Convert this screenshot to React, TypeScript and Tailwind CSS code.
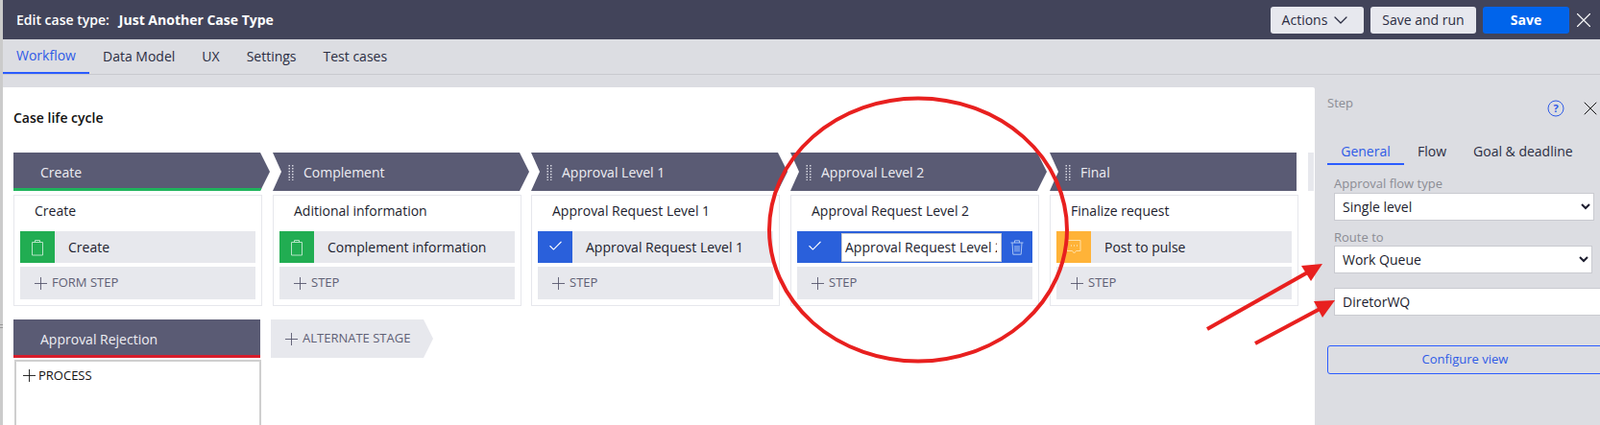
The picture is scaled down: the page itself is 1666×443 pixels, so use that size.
import { Check, ChevronDown, Plus, X } from 'lucide-react';

const font = "font-['Open_Sans',sans-serif]";

function Handle() {
  return (
    <svg width="7" height="16" viewBox="0 0 7 16" className="shrink-0 text-[#d5d6df]" fill="currentColor">
      {[0, 3, 6, 9, 12, 15].map((y) => (
        <g key={y}>
          <rect x="0.5" y={y} width="1.5" height="1.5" />
          <rect x="4" y={y} width="1.5" height="1.5" />
        </g>
      ))}
    </svg>
  );
}

function Clipboard() {
  return (
    <svg width="14" height="18" viewBox="0 0 14 18" fill="none" stroke="#b5e4c6" strokeWidth="1">
      <path d="M1.5 3.5h11v13.5h-11z" />
      <path d="M4.5 3.5V1.5h5v2" />
    </svg>
  );
}

function Pulse() {
  return (
    <svg width="16" height="17" viewBox="0 0 16 17" fill="none" stroke="#ffe0a6" strokeWidth="1">
      <path d="M1 1.5h14v11h-4.5l-2 2.5-2-2.5H1z" />
      <path d="M5 7h1M8 7h1M11 7h1" strokeWidth="1.3" />
    </svg>
  );
}

function Trash() {
  return (
    <svg width="14" height="16" viewBox="0 0 14 16" fill="none" stroke="#a9c4f2" strokeWidth="1">
      <path d="M0.5 3h13M4.5 3V0.8h5V3M2 3l.8 12.2h8.4L12 3M5 6v6.5M7 6v6.5M9 6v6.5" />
    </svg>
  );
}

function AddRow({ label }: { label: string }) {
  return (
    <div className="flex h-[34px] items-center bg-[#e7e8ed] pl-[11px] text-[13px] text-[#5f6075]">
      <Plus size={21} strokeWidth={1} className="mr-[1px] text-[#53546a]" />
      {label}
    </div>
  );
}

function StepRow({ cell, icon, children }: { cell: string; icon: React.ReactNode; children: React.ReactNode }) {
  return (
    <div className="flex h-[33px] items-center bg-[#e7e8ed] text-sm text-[#1c1d2e]">
      <div className={`flex h-full w-[36px] shrink-0 items-center justify-center ${cell}`}>{icon}</div>
      <span className="pl-[14px]">{children}</span>
    </div>
  );
}

const stages = [
  { name: 'Create', title: 'Create', step: 'Create', cell: 'bg-[#21ad52]', icon: <Clipboard />, add: 'FORM STEP', gap: '' },
  { name: 'Complement', title: 'Aditional information', step: 'Complement information', cell: 'bg-[#21ad52]', icon: <Clipboard />, add: 'STEP', gap: 'ml-[11px]' },
  { name: 'Approval Level 1', title: 'Approval Request Level 1', step: 'Approval Request Level 1', cell: 'bg-[#2a60db]', icon: <Check size={17} strokeWidth={1.5} className="mb-[3px] text-white" />, add: 'STEP', gap: 'ml-[10px]' },
  { name: 'Approval Level 2', title: 'Approval Request Level 2', step: '', cell: '', icon: null, add: 'STEP', gap: 'ml-[11px]' },
  { name: 'Final', title: 'Finalize request', step: 'Post to pulse', cell: 'bg-[#ffb338]', icon: <Pulse />, add: 'STEP', gap: 'ml-[11px]' },
];

function Stage({ index }: { index: number }) {
  const s = stages[index];
  const first = index === 0;
  const last = index === stages.length - 1;
  let shape = 'w-[267px] pl-[16px] [clip-path:polygon(0_0,calc(100%-10px)_0,100%_50%,calc(100%-10px)_100%,0_100%,9px_50%)]';
  if (first) shape = 'w-[267px] pl-[28px] [clip-path:polygon(0_0,calc(100%-10px)_0,100%_50%,calc(100%-10px)_100%,0_100%)]';
  if (last) shape = 'w-[257px] pl-[16px] [clip-path:polygon(0_0,100%_0,100%_100%,0_100%,9px_50%)]';
  return (
    <div className={`w-[259px] shrink-0 ${s.gap}`}>
      <div className={`relative flex h-[40px] items-center gap-[9px] bg-[#5a5b74] pt-[1px] text-sm text-[#eeeef3] ${shape}`}>
        {!first && <Handle />}
        {s.name}
        {first && <div className="absolute inset-x-0 bottom-0 h-[3px] bg-[#1fb45c]" />}
      </div>
      <div className="mt-[4px] h-[116px] border border-[#e6e7ec] px-[6px]">
        <div className="mb-[6px] flex h-[31px] items-center pl-[15px] text-sm text-[#1c1d2e]">{s.title}</div>
        {index === 3 ? (
          <div className="flex h-[33px] items-center bg-[#2a60db]">
            <div className="flex h-full w-[36px] shrink-0 items-center justify-center">
              <Check size={17} strokeWidth={1.5} className="mb-[3px] text-white" />
            </div>
            <input
              readOnly
              value="Approval Request Level 2"
              className="ml-[10px] h-[30px] w-[167px] border border-[#c9cad0] bg-white pl-[3px] pr-[4px] text-sm text-[#1c1d2e] outline-none"
            />
            <div className="flex flex-1 justify-center">
              <Trash />
            </div>
          </div>
        ) : (
          <StepRow cell={s.cell} icon={s.icon}>
            {s.step}
          </StepRow>
        )}
        <div className="mt-[4px]">
          <AddRow label={s.add} />
        </div>
      </div>
    </div>
  );
}

export default function App() {
  return (
    <div className={`relative flex h-[443px] w-[1666px] overflow-hidden bg-[#dcdde2] ${font}`}>
      <div className="relative w-[3px] shrink-0 bg-[#cbcbcb]">
        <div className="absolute left-0 top-[338px] h-[1px] w-[3px] bg-[#999]" />
        <div className="absolute left-0 top-[341px] h-[1px] w-[3px] bg-[#999]" />
      </div>

      <div className="flex min-w-0 flex-1 flex-col">
        {/* top bar */}
        <header className="flex h-[41px] shrink-0 items-center bg-[#42445a] pl-[14px] text-white">
          <div className="text-sm font-semibold">Edit case type:</div>
          <div className="ml-[10px] text-sm font-bold">Just Another Case Type</div>
          <div className="ml-auto flex items-center gap-[7px] pr-[4px]">
            <button className="flex h-[28px] w-[97px] items-center justify-center gap-[2px] rounded-[3px] bg-[#e7e8ee] text-sm text-[#2b2d42]">
              Actions <ChevronDown size={24} strokeWidth={1.25} />
            </button>
            <button className="h-[28px] w-[110px] rounded-[3px] bg-[#e7e8ee] text-sm text-[#2b2d42]">Save and run</button>
            <button className="h-[28px] w-[90px] rounded-[3px] bg-[#0064eb] text-sm font-bold">Save</button>
            <X size={26} strokeWidth={1} className="-ml-[5px]" />
          </div>
        </header>

        {/* tabs */}
        <nav className="flex h-[37px] shrink-0 border-b border-[#c8c9ce] text-sm text-[#2b2d42]">
          <div className="flex h-[36px] w-[90px] items-center justify-center border-b-2 border-[#2b5cff] text-[#2f5be6]">Workflow</div>
          {['Data Model', 'UX', 'Settings', 'Test cases'].map((t) => (
            <div key={t} className="flex h-[36px] items-center px-[14px]">
              {t}
            </div>
          ))}
        </nav>

        <div className="flex min-h-0 flex-1">
          {/* canvas */}
          <main className="mt-[13px] w-[1366px] shrink-0 rounded-tr-[2px] bg-white pl-[11px] pt-[22px] text-[#111]">
            <h2 className="h-[20px] text-sm font-semibold leading-[20px] text-[#111]">Case life cycle</h2>
            <div className="relative mt-[26px] flex">
              {stages.map((s, i) => (
                <Stage key={s.name} index={i} />
              ))}
              <div className="absolute left-[1348px] top-0 h-[40px] w-[6px] bg-[#e7e8ed]" />
            </div>
            <div className="mt-[14px] flex">
              <div className="w-[258px] shrink-0">
                <div className="relative flex h-[40px] w-[257px] items-center bg-[#5a5b74] pl-[28px] pt-[1px] text-sm text-[#eeeef3]">
                  Approval Rejection
                  <div className="absolute inset-x-0 bottom-0 h-[3px] bg-[#d81d2c]" />
                </div>
                <div className="ml-[1px] mt-[2px] flex h-[80px] items-start border-2 border-b-0 border-[#cfcfcf] pl-[3px] pt-[4px] text-[13px] text-[#111]">
                  <Plus size={21} strokeWidth={1} className="mr-[-1px]" />
                  <span className="leading-[21px]">PROCESS</span>
                </div>
              </div>
              <div className="ml-[10px] flex h-[40px] w-[169px] items-center bg-[#e7e8ed] pl-[11px] text-[13px] text-[#5f6075] [clip-path:polygon(0_0,calc(100%-10px)_0,100%_50%,calc(100%-10px)_100%,0_100%)]">
                <Plus size={21} strokeWidth={1} className="mr-[1px] text-[#53546a]" />
                ALTERNATE STAGE
              </div>
            </div>
          </main>

          {/* step panel */}
          <aside className="min-w-0 flex-1 pl-[13px] pt-[20px]">
            <div className="flex items-start justify-between">
              <div className="text-[13px] leading-[18px] text-[#8b8c94]">Step</div>
              <div className="-mr-[2px] mt-[3px] flex items-center gap-[15px]">
                <svg width="18" height="18" viewBox="0 0 18 18" fill="none" className="text-[#2f5be6]">
                  <circle cx="9" cy="9" r="8" stroke="currentColor" strokeWidth="1" />
                  <text x="9" y="13" textAnchor="middle" fontSize="11" fontWeight="700" fill="currentColor">?</text>
                </svg>
                <X size={24} strokeWidth={1} className="text-[#111]" />
              </div>
            </div>
            <div className="mt-[20px] flex h-[39px] text-sm text-[#2b2d42]">
              <div className="flex h-[27px] w-[80px] items-center justify-center border-b-2 border-[#2b5cff] text-[#2f5be6]">General</div>
              <div className="flex h-[25px] items-center pl-[14px]">Flow</div>
              <div className="flex h-[25px] items-center pl-[28px]">Goal &amp; deadline</div>
            </div>
            <div className="ml-[7px]">
              <div className="-mt-[2px] h-[20px] text-[13px] leading-[18px] text-[#8b8c94]">Approval flow type</div>
              <select className="-mt-[1px] block h-[29px] w-[271px] border border-[#c9cad0] bg-white pl-[4px] text-sm text-[#1c1d2e] outline-none" defaultValue="Single level">
                <option>Single level</option>
              </select>
              <div className="mt-[8px] h-[18px] text-[13px] leading-[18px] text-[#8b8c94]">Route to</div>
              <select className="block h-[29px] w-[269px] border border-[#c9cad0] bg-white pl-[4px] text-sm text-[#1c1d2e] outline-none" defaultValue="Work Queue">
                <option>Work Queue</option>
              </select>
              <input readOnly value="DiretorWQ" className="mt-[15px] block h-[29px] w-[290px] border border-[#c9cad0] bg-white pl-[8px] text-sm text-[#1c1d2e] outline-none" />
            </div>
            <button className="mt-[31px] h-[30px] w-[287px] rounded-[3px] border border-[#2b5cff] text-[13px] text-[#2f5be6]">Configure view</button>
          </aside>
        </div>
      </div>

      {/* hand-drawn annotations */}
      <svg className="pointer-events-none absolute inset-0" width="1666" height="443" fill="none">
        <ellipse cx="956" cy="239.5" rx="155" ry="137" stroke="#e8201f" strokeWidth="4" />
        <path d="M1257 343L1365 282" stroke="#e8201f" strokeWidth="4" />
        <path d="M1377 275L1355 277L1365 293Z" fill="#e8201f" />
        <path d="M1307 358L1378 320" stroke="#e8201f" strokeWidth="4" />
        <path d="M1390 313L1368 314L1377 331Z" fill="#e8201f" />
      </svg>
    </div>
  );
}
